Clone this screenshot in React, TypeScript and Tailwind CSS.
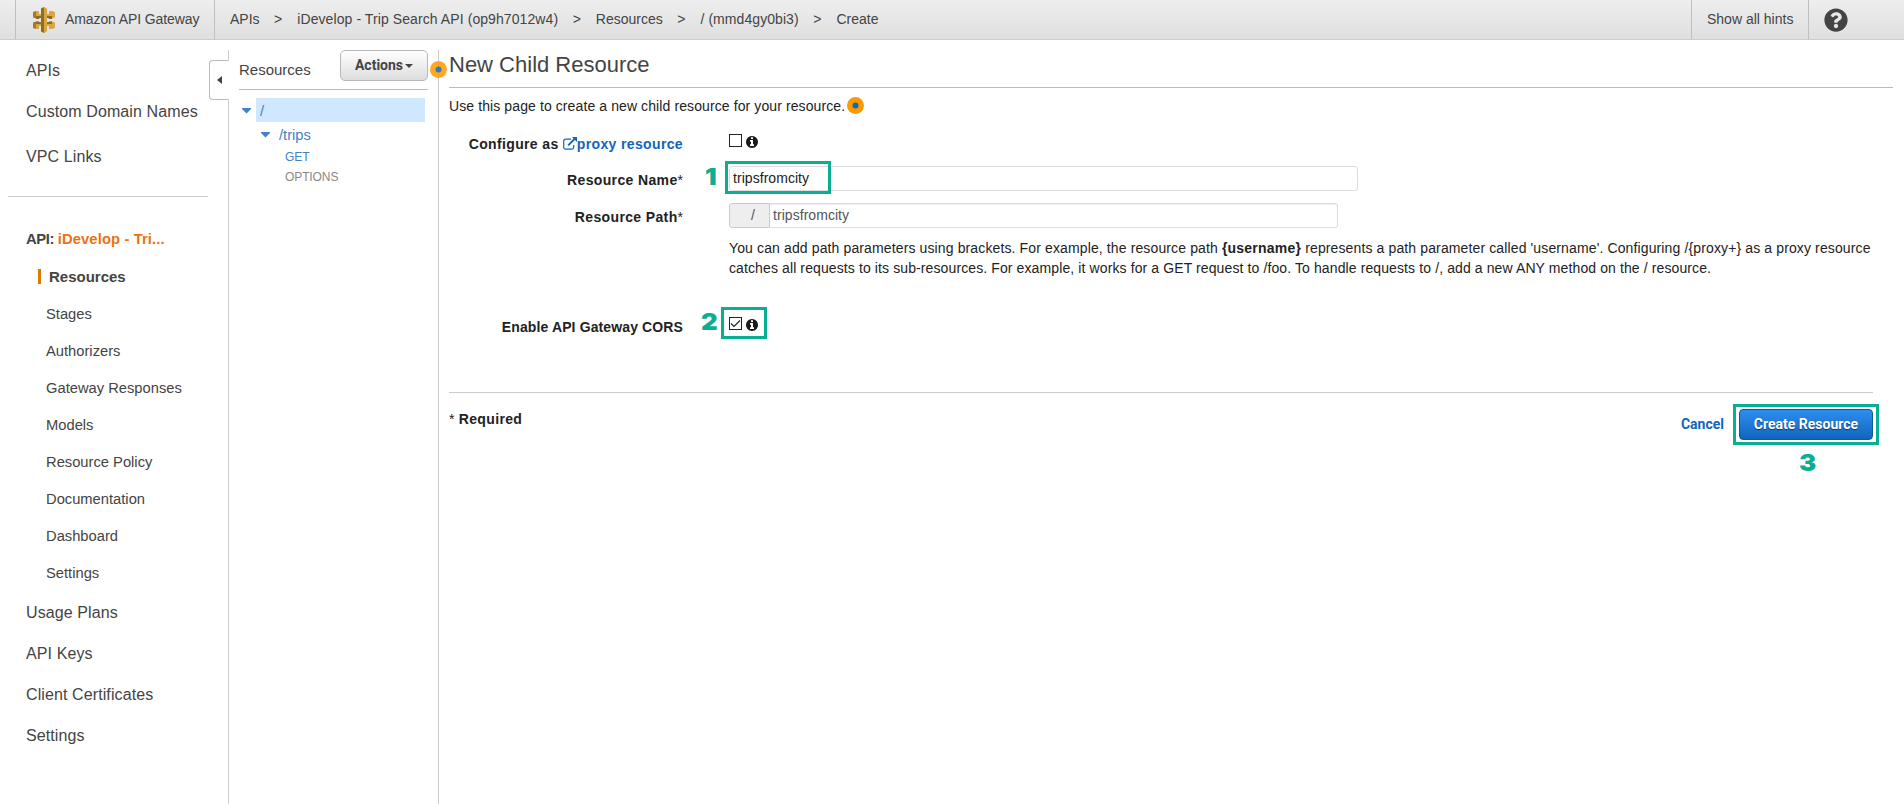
import React from "react";
import { FaQuestionCircle } from "react-icons/fa";

const breadcrumbs = [
  { label: "APIs", cls: "" },
  { label: "iDevelop - Trip Search API (op9h7012w4)", cls: "tracking-[0.085px]" },
  { label: "Resources", cls: "" },
  { label: "/ (mmd4gy0bi3)", cls: "tracking-[0.07px]" },
  { label: "Create", cls: "" },
];

const apiItems = [
  "Stages",
  "Authorizers",
  "Gateway Responses",
  "Models",
  "Resource Policy",
  "Documentation",
  "Dashboard",
  "Settings",
];

const bottomItems = ["Usage Plans", "API Keys", "Client Certificates", "Settings"];

function GatewayLogo() {
  return (
    <svg width="22" height="26" viewBox="0 0 22 26" className="shrink-0">
      <path d="M3 4h3v3h10V4h3v7.500h-3v-1H6v1H3z" fill="#d9a741" />
      <path d="M3 14.500h3v1h10v-1h3V22h-3v-3H6v3H3z" fill="#d9a741" />
      <path d="M0 5l3-1v7.500l-3-1zM0 15.500l3-1V22l-3-1z" fill="#a37a30" />
      <path d="M22 5l-3-1v7.500l3-1zM22 15.500l-3-1V22l3-1z" fill="#d9a741" />
      <path d="M3 9h5v2H6.500L6 12H3zM19 9h-5v2h1.500l.5 1h3zM3 14.500h3l.5.700H8V17H3zM19 14.500h-3l-.5.700H14V17h5z" fill="#8f6b29" />
      <path d="M8 1.500 11 0v26l-3-1.500z" fill="#8f6b29" />
      <path d="M14 1.500 11 0v26l3-1.500z" fill="#d9a741" />
    </svg>
  );
}

function ExternalLink() {
  return (
    <svg width="14" height="13" viewBox="0 0 14 13" className="mb-[4px] inline-block align-bottom">
      <path d="M8 2.200H2.600A1.900 1.900 0 0 0 .7 4.100v6.200a1.900 1.900 0 0 0 1.900 1.900h6.200a1.900 1.900 0 0 0 1.900-1.900V8" fill="none" stroke="#1166bb" strokeWidth="1.200" />
      <path d="M5.200 8.300 11.500 2" fill="none" stroke="#1166bb" strokeWidth="1.900" />
      <path d="M9 0h5v5z" fill="#1166bb" />
    </svg>
  );
}

function InfoIcon() {
  return (
    <svg width="12" height="12" viewBox="0 0 1536 1536" className="mt-[2px]">
      <path
        d="M1024 1248v-160q0-14-9-23t-23-9h-96V544q0-14-9-23t-23-9H544q-14 0-23 9t-9 23v160q0 14 9 23t23 9h96v320h-96q-14 0-23 9t-9 23v160q0 14 9 23t23 9h448q14 0 23-9t9-23zM896 352V192q0-14-9-23t-23-9H672q-14 0-23 9t-9 23v160q0 14 9 23t23 9h192q14 0 23-9t9-23zm640 416q0 209-103 385.500T1153.500 1433 768 1536t-385.500-103T103 1153.500 0 768t103-385.500T382.500 103 768 0t385.500 103T1433 382.500 1536 768z"
        fill="#1a1a1a"
      />
    </svg>
  );
}

function HintDot({ className }: { className: string }) {
  return (
    <svg width="17" height="17" viewBox="0 0 17 17" className={className}>
      <circle cx="8.500" cy="8.500" r="8.500" fill="#ff9900" />
      <circle cx="8.500" cy="8.500" r="3" fill="#1166bb" />
    </svg>
  );
}

function Checkbox({ checked }: { checked?: boolean }) {
  return (
    <span className="flex h-[13px] w-[13px] items-center justify-center border border-[#222] bg-white">
      {checked && (
        <svg width="11" height="11" viewBox="0 0 11 11">
          <path d="M1 5.500 4 8.500 10 2.500" fill="none" stroke="#222" strokeWidth="1.200" />
        </svg>
      )}
    </span>
  );
}

function Caret({ className }: { className: string }) {
  return (
    <svg width="9" height="6" viewBox="0 0 9 6" className={className}>
      <path d="M0 0h9v1L4.500 5.500 0 1z" fill="#4183c4" />
    </svg>
  );
}

function Header() {
  return (
    <header className="flex h-10 shrink-0 border-b border-[#ccc] bg-gradient-to-b from-[#eeeeee] to-[#dfdfdf] pl-[15px] text-[#444]">
      <div className="flex w-[200px] items-center gap-[10px] border-x border-[#bfbfbf] pl-[17px]">
        <GatewayLogo />
        <span className="mb-[2px] tracking-[-0.1px]">Amazon API Gateway</span>
      </div>
      <nav className="flex flex-1 items-center pb-[2px] pl-[15px]">
        {breadcrumbs.map((b, i) => (
          <React.Fragment key={b.label}>
            {i > 0 && <span className="mr-[15px] ml-[14.500px]">&gt;</span>}
            <span className={b.cls}>{b.label}</span>
          </React.Fragment>
        ))}
      </nav>
      <div className="flex w-[118px] items-center border-x border-[#bfbfbf] pb-[2px] pl-[15px]">Show all hints</div>
      <div className="flex w-[95px] items-center pl-[15px]">
        <FaQuestionCircle size={24} />
      </div>
    </header>
  );
}

function Sidebar() {
  return (
    <aside className="flex w-[209px] shrink-0 flex-col pl-2 pt-[21px] text-base leading-5 text-[#444]">
      <a className="pl-[18px] tracking-[0.1px]">APIs</a>
      <a className="mt-[21px] pl-[18px] tracking-[0.1px]">Custom Domain Names</a>
      <a className="mt-[25px] pl-[18px] tracking-[0.1px]">VPC Links</a>
      <hr className="mt-[29px] w-[200px] border-[#ccc]" />
      <div className="mt-8 pl-[18px] text-[14.800px] font-bold">
        <span className="tracking-[-0.4px]">API: </span>
        <span className="tracking-[0.1px] text-[#ec7211]">iDevelop - Tri...</span>
      </div>
      <div className="mt-5 ml-[30px] h-[15px] border-l-[3px] border-[#e07700] pl-2 text-[15px] leading-[15px] font-bold">
        Resources
      </div>
      <div className="mt-[23px] flex flex-col gap-[22px] pl-[38px] text-[14.720px] leading-[15px]">
        {apiItems.map((t) => (
          <a key={t} className="h-[15px] overflow-hidden">{t}</a>
        ))}
      </div>
      <div className="mt-[22px] flex flex-col gap-[21px] pl-[18px] tracking-[0.1px]">
        {bottomItems.map((t) => (
          <a key={t}>{t}</a>
        ))}
      </div>
    </aside>
  );
}

function CollapseStrip() {
  return (
    <div className="flex w-5 shrink-0 flex-col pt-[10px]">
      <div className="h-[11px] border-r border-[#ccc]" />
      <button className="-my-px flex h-[40px] w-[19px] items-center justify-center rounded-l-[4px] border border-r-0 border-[#bbb]">
        <svg width="5" height="8" viewBox="0 0 5 8">
          <path d="M5 0v8L0 4z" fill="#444" />
        </svg>
      </button>
      <div className="flex-1 border-r border-[#ccc]" />
    </div>
  );
}

function ResourceTree() {
  return (
    <section className="relative mt-[10px] w-[210px] shrink-0 border-r border-[#ccc] pl-[10px] text-[#4183c4]">
      <div className="flex h-10 w-[189px] items-start justify-between border-b border-[#bbb]">
        <h2 className="pt-[10px] text-[15px] leading-5 text-[#444]">Resources</h2>
        <button className="flex h-[31px] w-[88px] items-center justify-center gap-[2px] rounded-[5px] border border-[#b7b7b7] bg-gradient-to-b from-white to-[#dddddd] pb-px font-['Roboto'] font-bold text-[#444]">
          Actions
          <svg width="8" height="4" viewBox="0 0 8 4" className="mt-[2px]">
            <path d="M0 0h8L4 4z" fill="#444" />
          </svg>
        </button>
      </div>
      <div className="mt-2 flex h-6 items-center pl-[3px]">
        <Caret className="mt-[2px]" />
        <div className="ml-[5px] h-6 w-[169px] bg-[#cfe7ff] pl-1 text-[14.720px] leading-[26px]">/</div>
      </div>
      <div className="flex h-6 items-center pl-[22px] text-[14.720px]">
        <Caret className="mt-[2px]" />
        <span className="mt-[2px] ml-[9px]">/trips</span>
      </div>
      <div className="pt-px pl-[46px] text-[12px] leading-5 tracking-[-0.1px]">
        <div>GET</div>
        <div className="text-[#888]">OPTIONS</div>
      </div>
      <HintDot className="absolute top-[11px] right-[-9px] opacity-85" />
    </section>
  );
}

function Mark({ className, children }: { className: string; children: string }) {
  return (
    <span className={"absolute origin-left scale-x-110 font-['Inter'] text-[23.500px] leading-6 font-black text-[#0aae92] " + className}>
      {children}
    </span>
  );
}

function Label({ children, className = "tracking-[0.360px]" }: { children: React.ReactNode; className?: string }) {
  return <label className={"block w-[234px] shrink-0 text-right leading-5 font-bold " + className}>{children}</label>;
}

const star = <span className="font-normal tracking-normal">*</span>;

function Main() {
  return (
    <main className="flex min-w-0 flex-1 flex-col pl-[10px] text-[#222]">
      <h1 className="flex h-12 w-[1444px] items-start border-b border-[#bbb] pt-[12px] text-[22px] leading-[26px] text-[#444]">New Child Resource</h1>
      <p className="mt-2 flex h-5 items-center">
        <span className="tracking-[0.1px]">Use this page to create a new child resource for your resource.</span>
        <HintDot className="mb-px ml-[1.500px]" />
      </p>
      <div className="mt-[18px] flex">
        <Label>
          Configure as <ExternalLink />
          <span className="text-[#1166bb]">proxy resource</span>
        </Label>
        <div className="ml-[46px] flex items-start gap-1">
          <Checkbox />
          <InfoIcon />
        </div>
      </div>
      <div className="relative mt-3 flex h-[25px]">
        <div className="pt-1">
          <Label>Resource Name{star}</Label>
        </div>
        <div className="ml-[46px] h-[25px] w-[629px] rounded-[3px] border border-[#ddd] pl-[3px] leading-[22px] tracking-[0.050px]">tripsfromcity</div>
        <Mark className="top-[-1px] left-[256px]">1</Mark>
        <span className="absolute top-[-5px] left-[276px] h-[33px] w-[106px] border-[3px] border-[#0aae92]" />
      </div>
      <div className="mt-3 flex h-[25px]">
        <div className="pt-1">
          <Label>Resource Path{star}</Label>
        </div>
        <div className="ml-[46px] flex h-[25px] w-[609px] leading-[23px] text-[#555]">
          <span className="w-[41px] rounded-l-[3px] border border-[#ccc] bg-[#eee] pl-[21px]">/</span>
          <span className="flex-1 rounded-r-[3px] border border-l-0 border-[#ddd] pl-[3px] tracking-[0.050px] shadow-[inset_0_1px_1px_rgba(0,0,0,0.075)]">tripsfromcity</span>
        </div>
      </div>
      <p className="mt-[10px] ml-[280px] leading-5 tracking-[0.110px] whitespace-nowrap">
        <span className="tracking-[0.125px]">
          You can add path parameters using brackets. For example, the resource path <b className="tracking-[0.220px]">{"{username}"}</b> represents a path parameter called 'username'. Configuring {"/{proxy+}"} as a proxy resource
        </span>
        <br />
        catches all requests to its sub-resources. For example, it works for a GET request to /foo. To handle requests to /, add a new ANY method on the / resource.
      </p>
      <div className="relative mt-[39px] flex h-5">
        <Label className="tracking-[0.120px]">Enable API Gateway CORS</Label>
        <div className="ml-[46px] flex items-start gap-1">
          <Checkbox checked />
          <InfoIcon />
        </div>
        <Mark className="top-[-7px] left-[252px]">2</Mark>
        <span className="absolute top-[-10px] left-[272px] h-[32px] w-[46px] border-[3px] border-[#0aae92]" />
      </div>
      <hr className="mt-[55px] w-[1424px] border-[#ccc]" />
      <div className="relative mt-4 flex w-[1424px] items-start justify-between">
        <div className="leading-5 font-bold tracking-[0.360px]">{star} Required</div>
        <div className="flex items-center gap-[15px] font-['Roboto'] font-bold">
          <a className="pb-[2px] text-[#1166bb]">Cancel</a>
          <button className="h-[31px] w-[134px] rounded-[4px] border border-[#0f57a0] bg-gradient-to-b from-[#2e8df0] to-[#1166bb] pb-[2px] text-white [text-shadow:0_1px_1px_#00000080]">Create Resource</button>
        </div>
        <span className="absolute top-[-5px] right-[-6px] h-[41px] w-[146px] border-[3px] border-[#0aae92]" />
        <Mark className="top-[42px] left-[1350px]">3</Mark>
      </div>
    </main>
  );
}

export default function App() {
  return (
    <div className="flex h-[804px] w-[1904px] flex-col overflow-hidden bg-white font-['Liberation_Sans',Arial,sans-serif] text-[14px] leading-5">
      <Header />
      <div className="flex min-h-0 flex-1">
        <Sidebar />
        <CollapseStrip />
        <ResourceTree />
        <Main />
      </div>
    </div>
  );
}
